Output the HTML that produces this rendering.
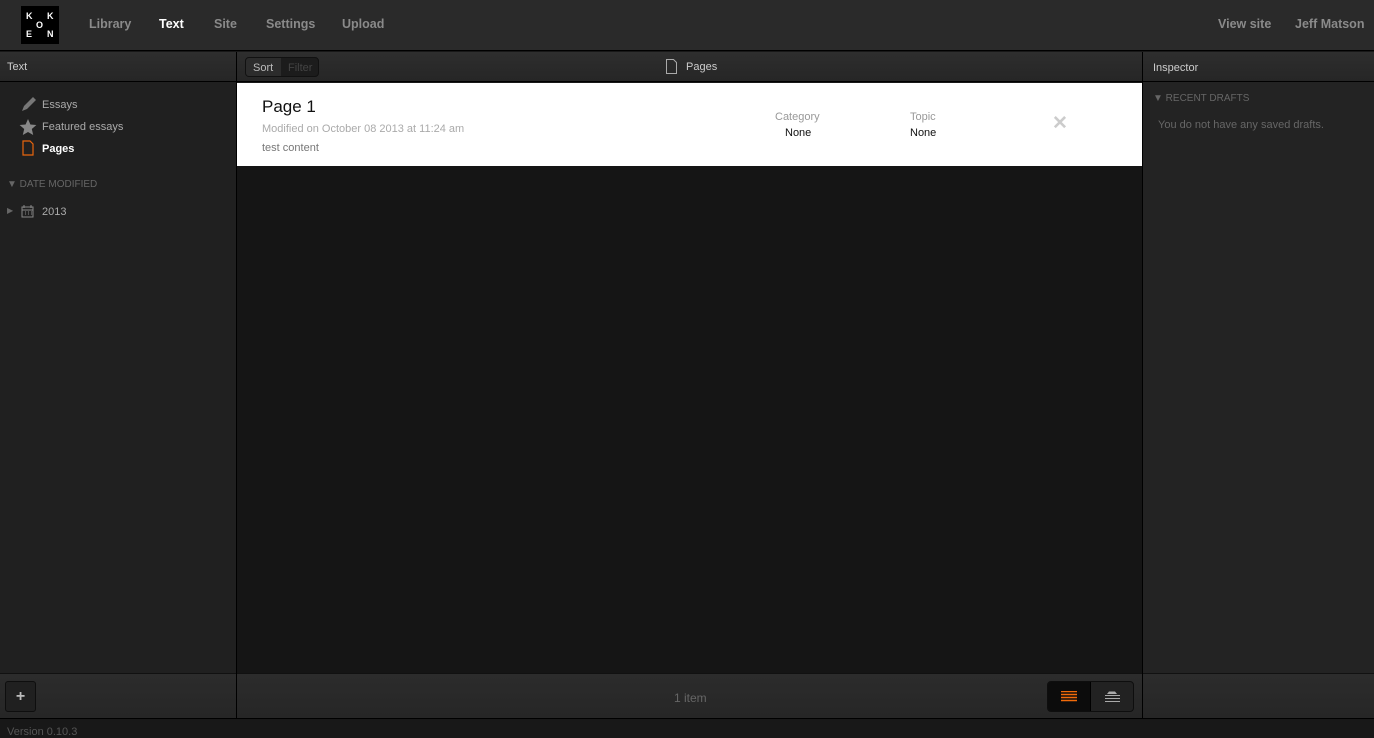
<!DOCTYPE html><html><head><style>
*{margin:0;padding:0;box-sizing:border-box}
body{width:1374px;height:734px;background:#181818;font-family:"Liberation Sans",sans-serif;font-size:11px;position:relative;overflow:hidden;color:#999}
.a{position:absolute}
.nav{color:#8a8a8a;font-size:12.5px;font-weight:bold;top:17px}
</style></head><body>
<div class="a" style="left:0;top:0;width:1374px;height:51px;background:#2a2a2a;border-bottom:1px solid #000"></div>
<div class="a" style="left:21px;top:6px;width:38px;height:38px;background:#000;color:#fff;font-size:9px;font-weight:bold;line-height:10px">
<span class="a" style="left:5px;top:5px">K</span><span class="a" style="left:26px;top:5px">K</span><span class="a" style="left:15px;top:14px">O</span><span class="a" style="left:5px;top:23px">E</span><span class="a" style="left:26px;top:23px">N</span></div>
<span class="a nav" style="left:89px">Library</span>
<span class="a nav" style="left:159px;color:#fff">Text</span>
<span class="a nav" style="left:214px">Site</span>
<span class="a nav" style="left:266px">Settings</span>
<span class="a nav" style="left:342px">Upload</span>
<span class="a nav" style="left:1218px">View site</span>
<span class="a nav" style="left:1295px">Jeff Matson</span>
<div class="a" style="left:0;top:52px;width:236px;height:30px;background:linear-gradient(#2e2e2e,#262626);border-bottom:1px solid #000"></div>
<span class="a" style="left:7px;top:61px;color:#ccc">Text</span>
<div class="a" style="left:0;top:82px;width:236px;height:591px;background:#202020"></div>
<div class="a" style="left:236px;top:52px;width:1px;height:667px;background:#000"></div>
<svg class="a" style="left:20px;top:96px" width="17" height="17"><path d="M2 15l2-5 9-9 3 3-9 9z" fill="#777"/></svg>
<span class="a" style="left:42px;top:99px;color:#aaa">Essays</span>
<svg class="a" style="left:19px;top:118px" width="18" height="18"><path d="M9 1l2.4 5.5 6 .5-4.6 4 1.4 6L9 14l-5.2 3 1.4-6L.6 7l6-.5z" fill="#888"/></svg>
<span class="a" style="left:42px;top:121px;color:#aaa">Featured essays</span>
<svg class="a" style="left:22px;top:140px" width="12" height="16"><path d="M1 1h7l3 3v11H1z" fill="none" stroke="#e8650e" stroke-width="1.2"/></svg>
<span class="a" style="left:42px;top:143px;color:#fff;font-weight:bold">Pages</span>
<span class="a" style="left:7px;top:179px;color:#666;font-size:10px">▼ DATE MODIFIED</span>
<span class="a" style="left:7px;top:206px;color:#666;font-size:8px">▶</span>
<svg class="a" style="left:21px;top:205px" width="13" height="13"><rect x="1" y="2" width="11" height="10" fill="none" stroke="#888"/><path d="M1 5h11M4 7h1M7 7h1M10 7h1M4 9h1M7 9h1M10 9h1M3 0v3M10 0v3" stroke="#888"/></svg>
<span class="a" style="left:42px;top:206px;color:#aaa">2013</span>
<div class="a" style="left:237px;top:52px;width:905px;height:30px;background:linear-gradient(#2e2e2e,#262626);border-bottom:1px solid #000"></div>
<div class="a" style="left:245px;top:57px;width:74px;height:20px;border:1px solid #111;border-radius:4px;background:#1c1c1c"></div>
<div class="a" style="left:246px;top:58px;width:35px;height:18px;background:#2c2c2c;border-radius:3px 0 0 3px"></div>
<span class="a" style="left:253px;top:62px;color:#bbb">Sort</span>
<span class="a" style="left:288px;top:62px;color:#444">Filter</span>
<svg class="a" style="left:666px;top:59px" width="11" height="15"><path d="M.5 .5h7l3 3v11H.5z" fill="none" stroke="#aaa"/></svg>
<span class="a" style="left:686px;top:61px;color:#ccc">Pages</span>
<div class="a" style="left:237px;top:83px;width:905px;height:590px;background:#151515"></div>
<div class="a" style="left:237px;top:83px;width:905px;height:83px;background:#fff"></div>
<span class="a" style="left:262px;top:97px;color:#111;font-size:17px">Page 1</span>
<span class="a" style="left:262px;top:123px;color:#aaa">Modified on October 08 2013 at 11:24 am</span>
<span class="a" style="left:262px;top:142px;color:#777">test content</span>
<span class="a" style="left:775px;top:111px;color:#999">Category</span>
<span class="a" style="left:785px;top:127px;color:#111">None</span>
<span class="a" style="left:910px;top:111px;color:#999">Topic</span>
<span class="a" style="left:910px;top:127px;color:#111">None</span>
<span class="a" style="left:1052px;top:112px;color:#ccc;font-size:19px;font-weight:bold">✕</span>
<div class="a" style="left:1142px;top:52px;width:1px;height:667px;background:#000"></div>
<div class="a" style="left:1143px;top:52px;width:231px;height:30px;background:linear-gradient(#2e2e2e,#262626);border-bottom:1px solid #000"></div>
<span class="a" style="left:1153px;top:62px;color:#ccc">Inspector</span>
<div class="a" style="left:1143px;top:82px;width:231px;height:591px;background:#232323"></div>
<span class="a" style="left:1153px;top:93px;color:#666;font-size:10px">▼ RECENT DRAFTS</span>
<span class="a" style="left:1158px;top:119px;color:#666">You do not have any saved drafts.</span>
<div class="a" style="left:0;top:673px;width:1374px;height:46px;background:linear-gradient(#2c2c2c,#262626);border-top:1px solid #111;border-bottom:1px solid #000"></div>
<div class="a" style="left:236px;top:673px;width:1px;height:46px;background:#000"></div>
<div class="a" style="left:1142px;top:673px;width:1px;height:46px;background:#000"></div>
<div class="a" style="left:5px;top:681px;width:31px;height:31px;background:#202020;border:1px solid #0e0e0e;border-radius:3px;color:#bbb;font-size:16px;font-weight:bold;text-align:center;line-height:29px">+</div>
<span class="a" style="left:674px;top:691px;color:#666;font-size:12px">1 item</span>
<div class="a" style="left:1047px;top:681px;width:87px;height:31px;background:#222;border:1px solid #0e0e0e;border-radius:4px"></div>
<div class="a" style="left:1048px;top:682px;width:43px;height:29px;background:#0c0c0c;border-radius:3px 0 0 3px;border-right:1px solid #000"></div>
<svg class="a" style="left:1061px;top:691px" width="17" height="12"><path d="M0 .5h16M0 3.5h16M0 6.5h16M0 9.5h16" stroke="#f06a0a" stroke-width="1.5"/></svg>
<svg class="a" style="left:1104px;top:691px" width="17" height="12"><path d="M3 3l2-2.5h6l2 2.5z" fill="#aaa"/><path d="M1 4.5h15M1 7.5h15M1 10.5h15" stroke="#aaa"/></svg>
<span class="a" style="left:7px;top:726px;color:#555">Version 0.10.3</span>
</body></html>
